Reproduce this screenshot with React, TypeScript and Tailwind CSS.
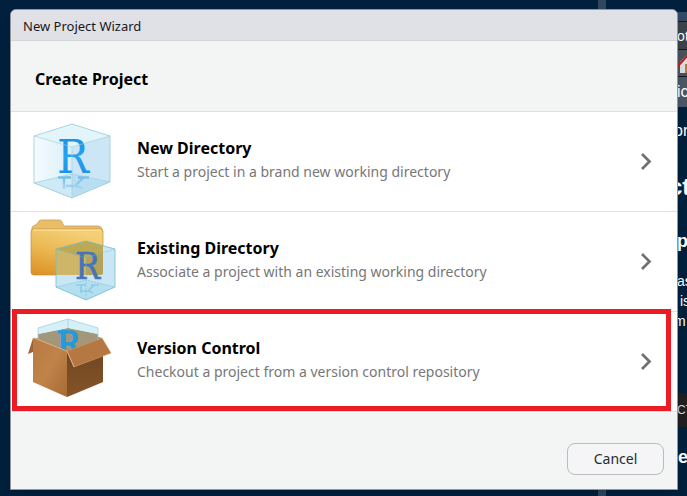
import React from "react";

function CubeIcon() {
  return (
    <svg viewBox="20 112 110 99" className="h-[99px] w-[110px] shrink-0" aria-hidden="true">
      <defs>
        <linearGradient id="left-face" x1="0" x2="1">
          <stop offset="0" stopColor="#f5fbff" />
          <stop offset="1" stopColor="#d9eff9" />
        </linearGradient>
        <linearGradient id="letter" x1="0" y1="0" x2="0" y2="1">
          <stop offset="0" stopColor="#1b86dc" />
          <stop offset="0.5" stopColor="#24a3f2" />
          <stop offset="1" stopColor="#1c86dc" />
        </linearGradient>
        <linearGradient id="mirror" x1="0" y1="176" x2="0" y2="191" gradientUnits="userSpaceOnUse">
          <stop offset="0" stopColor="#6fbbe4" />
          <stop offset="1" stopColor="#b4ddf2" />
        </linearGradient>
      </defs>
      <path d="M72 124 34 136V183L72 198 110 182V136Z" fill="#dceffa" />
      <path d="M34 136 72 124V174L34 183Z" fill="url(#left-face)" />
      <path d="M72 124 110 136V182L72 174Z" fill="#cce6f6" />
      <path d="M34 136 72 124 110 136 72 147Z" fill="#e2f5fb" />
      <path d="M34 183 72 174 110 182 72 198Z" fill="#b9def2" />
      <path d="M34 183 72 174V198Z" fill="#cdeaf5" />
      <path d="M58 177.500H71M78 177.500H89M64 178V189M66 186H75L83 178M75 186Q80 187 83 189" fill="none" stroke="url(#mirror)" strokeWidth="2.4" />
      <text x="57" y="173" fontSize="47" fontFamily="DejaVu Serif Condensed, DejaVu Serif, serif" fill="url(#letter)">R</text>
      <g fill="none" stroke="#9bcdd7" strokeWidth="0.8">
        <path d="M72 124 34 136V183L72 198 110 182V136Z" />
        <path d="M34 136 72 147 110 136M72 147V198M34 183 72 174 110 182" strokeOpacity="0.75" />
      </g>
    </svg>
  );
}

function FolderIcon() {
  return (
    <svg viewBox="20 212 110 99" className="h-[99px] w-[110px] shrink-0" aria-hidden="true">
      <defs>
        <linearGradient id="folder" x1="0.1" y1="1" x2="0.5" y2="0">
          <stop offset="0" stopColor="#dc9225" />
          <stop offset="0.5" stopColor="#eab650" />
          <stop offset="1" stopColor="#f5cf76" />
        </linearGradient>
        <clipPath id="folder-front">
          <rect x="31" y="229" width="72" height="46" rx="3" />
        </clipPath>
      </defs>
      <path d="M32 230V227L37 224 39 221Q40 220 42 220H60Q61 220 62 222L64 226H98Q101 226 102 229L103 232H32Z" fill="#eabe65" stroke="#c79b5a" strokeWidth="0.8" />
      <rect x="31" y="229" width="72" height="46" rx="3" fill="url(#folder)" stroke="#c08c3d" strokeWidth="0.7" />
      <path d="M33 230H101" stroke="#ffe6a5" />
      <path d="M86 241 56 249V287L86 300 115 287V249Z" fill="#c8e6f6" />
      <g clipPath="url(#folder-front)">
        <path d="M86 241 56 249V287L86 300 115 287V249Z" fill="#cfb568" />
        <path d="M86 241 115 249V287H86Z" fill="#b5a35c" />
        <path d="M56 249 86 241 115 249 86 258Z" fill="#bba956" />
      </g>
      <path d="M56 287 86 280 115 287 86 300Z" fill="#b4dff0" />
      <text x="75" y="279" fontSize="37" fontFamily="DejaVu Serif Condensed, DejaVu Serif, serif" fill="#4575b9" stroke="#4575b9" strokeWidth="0.5">R</text>
      <path d="M76 285H86M91 285H99M81 285V293M82 291H88L94 285M88 291Q92 292 93 293" fill="none" stroke="#8dcbe7" strokeWidth="1.7" />
      <g fill="none" stroke="#72bfc6" strokeWidth="0.8">
        <path d="M86 241 56 249V287L86 300 115 287V249Z" />
        <path d="M56 249 86 258 115 249M86 258V300M56 287 86 280 115 287" strokeOpacity="0.7" strokeDasharray="2 1" />
      </g>
    </svg>
  );
}

function BoxIcon() {
  return (
    <svg viewBox="20 312 110 99" className="h-[99px] w-[110px] shrink-0" aria-hidden="true">
      <defs>
        <linearGradient id="box-left" x1="0" y1="0" x2="1" y2="1">
          <stop offset="0" stopColor="#b87a43" />
          <stop offset="0.5" stopColor="#c08349" />
          <stop offset="1" stopColor="#a66a33" />
        </linearGradient>
        <linearGradient id="box-right" x1="0" y1="0" x2="0" y2="1">
          <stop offset="0" stopColor="#6c431f" />
          <stop offset="1" stopColor="#855428" />
        </linearGradient>
        <filter id="soft"><feGaussianBlur stdDeviation="1.5" /></filter>
        <clipPath id="box-opening"><path d="M30 315H105V338L67 351 35 341Z" /></clipPath>
      </defs>
      <path d="M32 380 67 395 103 381 68 392Z" fill="#444" opacity="0.6" filter="url(#soft)" />
      <path d="M38 328 68 319 98 328V343L68 350 38 341Z" fill="#d6f0f8" />
      <path d="M34 339 68 328 102 338 67 351Z" fill="#91805f" />
      <path d="M38 334 68 328 98 334V340L68 350 38 341Z" fill="#a3977b" />
      <path d="M38 328 68 319 98 328V334L68 328 38 334Z" fill="#d6f0f8" />
      <g clipPath="url(#box-opening)">
        <text x="57" y="356" fontSize="34" fontFamily="DejaVu Serif Condensed, DejaVu Serif, serif" fill="#209bdb" stroke="#209bdb" strokeWidth="1.5">R</text>
      </g>
      <path d="M38 341V328L68 319 98 328V340M68 319V328" fill="none" stroke="#a1d4df" strokeWidth="0.8" />
      <path d="M33 338 67 351V397L33 382Z" fill="url(#box-left)" />
      <path d="M67 351 103 340V382L67 397Z" fill="url(#box-right)" />
      <path d="M33 338 28 354 33 352Z" fill="#9d6537" />
      <path d="M67 351 102 338 111 353 74 367Z" fill="#b67843" stroke="#d09b67" strokeWidth="0.6" />
      <path d="M34 338 67 351 74 367" fill="none" stroke="#deb081" strokeWidth="1" />
    </svg>
  );
}

const options = [
  { title: "New Directory", detail: "Start a project in a brand new working directory", icon: <CubeIcon /> },
  { title: "Existing Directory", detail: "Associate a project with an existing working directory", icon: <FolderIcon /> },
  { title: "Version Control", detail: "Checkout a project from a version control repository", icon: <BoxIcon />, highlighted: true },
];

function Workspace() {
  return (
    <div className="absolute inset-0 flex justify-end overflow-hidden bg-[#00203d] font-['Liberation_Sans',sans-serif] text-sm text-white" aria-hidden="true">
      <div className="w-2 shrink-0 bg-[#30465f]" />
      <div className="flex w-[81px] shrink-0 flex-col overflow-hidden whitespace-nowrap">
        <div className="mt-3 h-[9px] bg-[#334a63]" />
        <div className="flex h-7 items-center border-t border-[#111c26] bg-[#3b444d] pl-[68px]"><span>lots</span></div>
        <div className="h-7 border-y border-[#111c26] bg-[#4a535c] pl-[71px]">
          <svg viewBox="0 0 24 26" className="h-[26px] w-6">
            <path d="M3 12V23H22V10L12 3Z" fill="#ddd" />
            <path d="M8 14H14V23H8Z" fill="#b77b40" />
            <path d="M0 17 12 4 24 17" fill="none" stroke="#b82020" strokeWidth="2" />
          </svg>
        </div>
        <div className="flex h-[30px] items-center bg-[#4b5765] pl-[71px] text-base"><span>ic</span></div>
        <div className="flex h-12 items-center pl-[68px] text-base"><span>or</span></div>
        <div className="flex h-16 items-center pl-[63px] text-2xl font-bold"><span>ct</span></div>
        <div className="flex h-11 items-center pl-[71px] text-lg font-bold"><span>p</span></div>
        <div className="mt-2 flex h-5 items-center pl-[71px]"><span>as</span></div>
        <div className="flex h-5 items-center pl-[74px]"><span>is</span></div>
        <div className="flex h-5 items-center pl-[68px]"><span>m</span></div>
        <div className="mt-[62px] flex h-[34px] items-center bg-[#202020] pl-[71px] text-xs text-gray-300"><span>CT</span></div>
        <div className="flex h-[60px] items-center pl-[61px] text-lg font-bold"><span>ne</span></div>
      </div>
    </div>
  );
}

export default function App() {
  return (
    <div className="relative min-h-screen pt-[9px] pr-[9px] pb-[7px] pl-[10px] font-['Noto_Sans','Open_Sans',sans-serif]">
      <Workspace />
      <main className="relative overflow-hidden rounded-t-md border border-[#929599] bg-[#f3f4f4] shadow-lg" role="dialog" aria-labelledby="window-title">
        <h1 id="window-title" className="h-[31px] border-b border-[#d4d5d7] bg-[#e0e1e6] pl-3 text-[13px] leading-[33px] text-[#17181d]">New Project Wizard</h1>
        <h2 className="h-[71px] border-b border-[#dfe1e1] pl-6 text-base leading-[76px] font-bold text-black">Create Project</h2>
        <ul className="bg-white">
          {options.map((option) => (
            <li key={option.title} className="relative border-b border-[#dedfdf]">
              <button type="button" className="flex h-[99px] w-full items-center pr-[25px] pl-[9px] text-left">
                {option.icon}
                <span className="ml-[7px] flex-1 pb-1">
                  <span className="block text-base leading-6 font-bold text-black">{option.title}</span>
                  <span className="block text-sm leading-6 text-[#777]">{option.detail}</span>
                </span>
                <svg viewBox="0 0 12 18" className="h-[18px] w-3" fill="none" stroke="#6f7072" strokeWidth="2.7" aria-hidden="true">
                  <path d="m2 1 7.5 7.5L2 16" />
                </svg>
              </button>
              {option.highlighted && <div className="pointer-events-none absolute -top-[3px] right-[6px] bottom-0 left-px border-5 border-[#ed1c24]" />}
            </li>
          ))}
        </ul>
        <footer className="flex h-[77px] items-start justify-end border-t border-white pt-[30px] pr-[13px]">
          <button type="button" className="h-8 w-[97px] rounded-lg border border-[#bbbcbd] bg-[#f5f5f7] text-sm text-[#292a2e]">Cancel</button>
        </footer>
      </main>
    </div>
  );
}
